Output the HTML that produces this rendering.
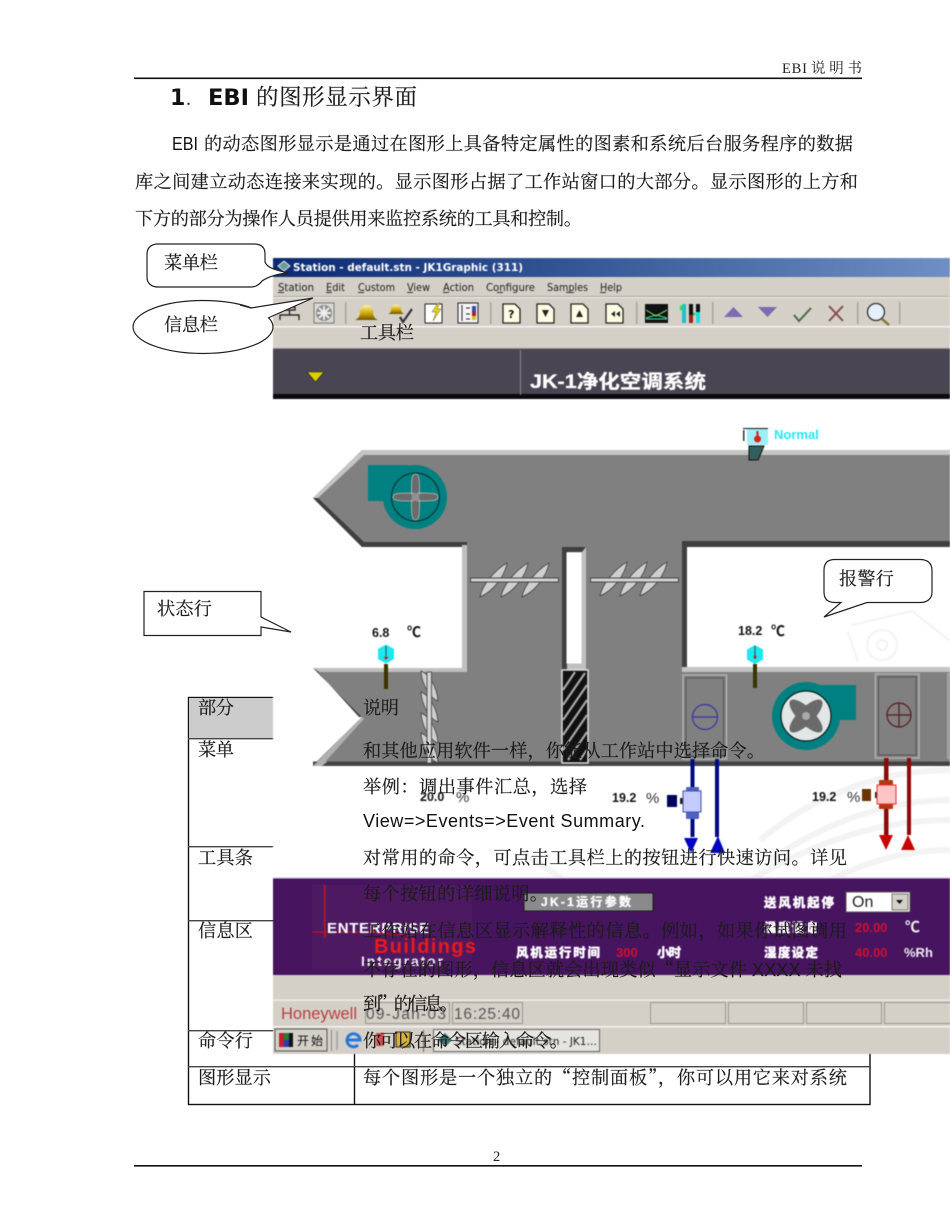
<!DOCTYPE html>
<html><head><meta charset="utf-8"><title>EBI 说明书</title>
<style>
html,body{margin:0;padding:0;background:#fff;width:950px;height:1230px;overflow:hidden}
svg{display:block;font-family:"Liberation Serif","Noto Serif CJK SC",serif}
.cn{font-family:"Noto Serif CJK SC","Liberation Serif",serif;font-size:18.2px;fill:#1c1c1c;stroke:#1c1c1c;stroke-width:.18}
.san{font-family:"Liberation Sans","Noto Sans CJK SC",sans-serif}
.ui{font-family:"DejaVu Sans","Liberation Sans",sans-serif}
.b{font-weight:700;fill:#111}
.w{font-family:"Noto Sans CJK SC",sans-serif;font-weight:900;fill:#fff;stroke:#fff;stroke-width:.3}
.soft{filter:blur(.45px)}
</style></head><body>
<svg width="950" height="1230" viewBox="0 0 950 1230" xmlns="http://www.w3.org/2000/svg">
<defs>
<linearGradient id="tb" x1="0" x2="1" y1="0" y2="0"><stop offset="0" stop-color="#0c2a72"/><stop offset=".5" stop-color="#3a5c9a"/><stop offset="1" stop-color="#6f90c4"/></linearGradient>
<linearGradient id="bell" x1="0" x2="0" y1="0" y2="1"><stop offset="0" stop-color="#fff2a0"/><stop offset=".6" stop-color="#c8a000"/><stop offset="1" stop-color="#6a5400"/></linearGradient>
<path id="leaf" d="M0 34C2 22 15 7 27 0C25 12 14 28 0 34Z" fill="#cfcfcf" stroke="#333" stroke-width=".7"/>
<path id="vleaf" d="M0 0C8 3 16 16 17 30C9 27 1 14 0 0Z" fill="#cfcfcf" stroke="#333" stroke-width=".7"/>
</defs>

<!-- header -->
<text x="782" y="73" font-size="14.500" textLength="25" fill="#222">EBI</text>
<text x="811" y="73" font-size="14.500" textLength="51" fill="#222" style="font-family:'Noto Serif CJK SC',serif">说明书</text>
<rect x="134" y="77.500" width="728" height="1.600" fill="#111"/>
<text x="170" y="105" font-size="22" class="ui" font-weight="700" fill="#111">1</text>
<text x="186" y="105" font-size="20" fill="#333">.</text>
<text x="208" y="105" font-size="22" class="ui" font-weight="700" fill="#111" textLength="41" lengthAdjust="spacingAndGlyphs">EBI</text>
<text x="256" y="105" class="cn" style="font-size:22.500px" textLength="161">的图形显示界面</text>
<text x="172" y="150" class="san" font-size="18" fill="#111" textLength="26" lengthAdjust="spacingAndGlyphs">EBI</text>
<text x="204" y="150" class="cn" textLength="649">的动态图形显示是通过在图形上具备特定属性的图素和系统后台服务程序的数据</text>
<text x="135" y="188" class="cn" textLength="723">库之间建立动态连接来实现的。显示图形占据了工作站窗口的大部分。显示图形的上方和</text>
<text x="135" y="225" class="cn" textLength="447">下方的部分为操作人员提供用来监控系统的工具和控制。</text>

<!-- table -->
<g fill="none" stroke="#111" stroke-width="1.400">
<rect x="188.500" y="697.500" width="681.500" height="407"/>
<line x1="354.500" y1="697" x2="354.500" y2="1105"/>
</g>
<rect x="189" y="698" width="100" height="40" fill="#cccccc"/>
<g fill="#444">
<rect x="188" y="738" width="682" height="1.400"/><rect x="188" y="846" width="682" height="1.400"/><rect x="188" y="920" width="682" height="1.400"/><rect x="188" y="1030" width="682" height="1.400"/><rect x="188" y="1066" width="682" height="1.400"/>
</g>

<!-- screenshot image -->
<g class="soft">
<rect x="273" y="258" width="677" height="796" fill="#fff"/>
<!-- window chrome -->
<rect x="273" y="258" width="677" height="19" fill="url(#tb)"/>
<rect x="273" y="277" width="677" height="72" fill="#d4d0c8"/>
<rect x="273" y="297" width="677" height="1" fill="#f4f2ec"/><rect x="273" y="296" width="677" height="1" fill="#aaa69e"/>
<rect x="273" y="326" width="677" height="1.500" fill="#f4f2ec"/>
<rect x="273" y="348" width="677" height="1.500" fill="#8e8a84"/>
<rect x="273" y="349" width="677" height="47" fill="#4a4552"/>
<rect x="273" y="394" width="677" height="5" fill="#0b0a0e"/>
<rect x="520" y="350" width="1" height="45" fill="#8c8890"/>
<path d="M307 372h17l-8.500 10z" fill="#d8d000" stroke="#222" stroke-width=".6"/>
<path d="M278 266l6-5 6 5-6 5z" fill="#6f9a9a" stroke="#d0e8e8" stroke-width="1"/>
<text x="293" y="271" class="ui" font-size="11" font-weight="700" fill="#fff" textLength="230" lengthAdjust="spacingAndGlyphs">Station - default.stn - JK1Graphic (311)</text>
<g class="ui" font-size="10.500" fill="#222">
<text x="278" y="291" textLength="36" lengthAdjust="spacingAndGlyphs">Station</text><text x="326" y="291" textLength="19" lengthAdjust="spacingAndGlyphs">Edit</text><text x="358" y="291" textLength="37" lengthAdjust="spacingAndGlyphs">Custom</text><text x="407" y="291" textLength="23" lengthAdjust="spacingAndGlyphs">View</text><text x="443" y="291" textLength="31" lengthAdjust="spacingAndGlyphs">Action</text><text x="486" y="291" textLength="49" lengthAdjust="spacingAndGlyphs">Configure</text><text x="547" y="291" textLength="41" lengthAdjust="spacingAndGlyphs">Samples</text><text x="600" y="291" textLength="22" lengthAdjust="spacingAndGlyphs">Help</text>
</g>
<g fill="#333"><rect x="278" y="292" width="6" height="1"/><rect x="326" y="292" width="6" height="1"/><rect x="358" y="292" width="6" height="1"/><rect x="407" y="292" width="6" height="1"/><rect x="443" y="292" width="6" height="1"/><rect x="497" y="292" width="6" height="1"/><rect x="566" y="292" width="8" height="1"/><rect x="600" y="292" width="6" height="1"/></g>
<!-- toolbar icons -->
<path d="M280 320v-5h19v5M289.500 315v-5M284 310h11v-3h-11z" fill="none" stroke="#111" stroke-width="1.200"/>
<rect x="314" y="303" width="20" height="20" fill="#d8d8d8" stroke="#777"/><circle cx="324" cy="313" r="8" fill="#888"/><path d="M324 306v14M317 313h14M319 308l10 10M329 308l-10 10" stroke="#eee" stroke-width="2"/>
<path d="M355 320c4-2 5-4 5-9 0-8 13-8 13 0 0 5 1 7 5 9z" fill="url(#bell)"/>
<path d="M388 314c3-1 3-3 3-5 0-6 10-6 10 0 0 2 1 4 3 5z" fill="url(#bell)"/><path d="M400 317l3 5 9-13" fill="none" stroke="#333" stroke-width="2.200"/>
<rect x="425" y="304" width="17" height="19" fill="#fff" stroke="#222"/><path d="M438 303l-6 9h4l-3 9 8-12h-4l3-6z" fill="#e8d800" stroke="#555" stroke-width=".5"/>
<rect x="458" y="303" width="20" height="20" fill="#f4f4f4" stroke="#222"/><rect x="472" y="306" width="4" height="5" fill="#3050b0"/><rect x="472" y="311" width="4" height="5" fill="#a02030"/><rect x="472" y="316" width="4" height="4" fill="#d8c020"/><path d="M462 305v16M466 308h4M466 314h4M466 319h4" stroke="#222"/>
<g fill="#ffffe4" stroke="#222" stroke-width="1.300"><path d="M503 304h12l5 5v14h-17z"/><path d="M537 304h12l5 5v14h-17z"/><path d="M571 304h12l5 5v14h-17z"/><path d="M606 304h12l5 5v14h-17z"/></g>
<text x="508" y="318" font-size="11" class="ui" font-weight="700" fill="#111">?</text>
<path d="M542 310h7l-3.500 7zM576 317h7l-3.500-7z" fill="#222"/><path d="M611 314l4-3v6zM616 314l4-3v6z" fill="#222"/>
<rect x="645" y="304" width="23" height="19" fill="#111"/><path d="M646 310l10 6 11-6M646 318l10-3 11 3" fill="none" stroke="#6be07a" stroke-width="1"/><path d="M646 319h21" stroke="#3ce0e0"/>
<g><rect x="682" y="304" width="4" height="19" fill="#20c0c8"/><rect x="689" y="304" width="4" height="19" fill="#111"/><rect x="689" y="315" width="4" height="8" fill="#a02020"/><rect x="696" y="304" width="4" height="19" fill="#20d8e0"/><rect x="696" y="304" width="4" height="8" fill="#111"/><path d="M680 305l4 3-4 3zM693 312l4 2-4 2z" fill="#20e050"/></g>
<path d="M724 317l9.500-10 9.500 10z" fill="#7b6bb0"/><path d="M758 307h19l-9.500 10z" fill="#7b6bb0"/>
<path d="M794 315l5 6 12-13" fill="none" stroke="#4a6a40" stroke-width="2"/><path d="M829 306l14 15M843 306l-14 15" stroke="#8a4a50" stroke-width="2"/>
<circle cx="876" cy="312" r="8.500" fill="#e4f0fa" stroke="#333" stroke-width="1.300"/><path d="M882 319l7 6" stroke="#8a7a30" stroke-width="2.500"/>
<g fill="#a8a49c"><rect x="345" y="302" width="1.500" height="22"/><rect x="490" y="302" width="1.500" height="22"/><rect x="636" y="302" width="1.500" height="22"/><rect x="712" y="302" width="1.500" height="22"/><rect x="857" y="302" width="1.500" height="22"/><rect x="899" y="302" width="1.500" height="22"/></g>
<text x="530" y="388" class="w" font-size="19" textLength="176" lengthAdjust="spacingAndGlyphs" style="font-family:'Liberation Sans','Noto Sans CJK SC',sans-serif;font-weight:700">JK-1净化空调系统</text>

<!-- watermark lower -->
<g fill="none" stroke="#f3f3f3" stroke-width="6">
<path d="M760 840c60-50 130-70 190-70M770 860c60-40 120-60 180-60M750 880c70-40 130-60 200-60M830 880c40-20 80-30 120-30M530 858l32 20"/>
</g>

<!-- duct upper -->
<path d="M313 498L362 450H950V541H682V668H467V547H362Z" fill="#808080"/>
<path d="M313 498L362 450H950v5H364L318 498z" fill="#c4c4c4"/>
<path d="M313 498L362 547H467v-5H364L318 498z" fill="#404040"/>
<rect x="462" y="545" width="5" height="125" fill="#c0c0c0"/>
<!-- lower duct -->
<path d="M313 668H950V765H313L362 717Z" fill="#808080"/>
<rect x="467" y="660" width="215" height="14" fill="#808080"/>
<path d="M313 668H467v4H320z" fill="#c0c0c0"/>
<path d="M313 668L362 717l-3 0L318 672z" fill="#404040"/>
<path d="M313 766L362 717l2 2-39 43z" fill="#b0b0b0"/>
<rect x="313" y="761.500" width="637" height="4.500" fill="#444"/>
<path d="M313 766l10-10 4 6-5 4z" fill="#b0b0b0"/>
<rect x="682" y="541" width="268" height="6" fill="#404040"/><rect x="682" y="541" width="5" height="128" fill="#404040"/>
<rect x="687" y="547" width="263" height="120" fill="#fff"/>
<rect x="682" y="667" width="268" height="5" fill="#c4c4c4"/>
<g fill="none" stroke="#f3f3f3" stroke-width="2"><path d="M852 625l60-14 38 30M858 662l-10-30"/><circle cx="882" cy="645" r="15"/><circle cx="882" cy="645" r="5"/></g>
<!-- slot -->
<rect x="562" y="547" width="24" height="123" fill="#c0c0c0"/><path d="M562 547h24l-4 5h-15v118h-5z" fill="#404040"/>
<rect x="566.500" y="552.500" width="15" height="111" fill="#fff"/>
<!-- filter -->
<rect x="562" y="670" width="26" height="93" fill="#111" stroke="#ddd" stroke-width="1.500"/>
<path d="M563 690l12-18M563 705l22-32M563 720l24-35M563 735l24-35M563 750l24-35M568 760l19-28M580 760l7-10" stroke="#a8a8a8" stroke-width="2.200"/>
<!-- dampers -->
<use href="#leaf" x="480" y="563"/><use href="#leaf" x="501" y="563"/><use href="#leaf" x="522" y="563"/>
<rect x="470.500" y="578" width="88" height="4" fill="#d4d4d4" stroke="#444"/>
<use href="#leaf" x="600" y="562"/><use href="#leaf" x="620" y="562"/><use href="#leaf" x="640" y="562"/>
<rect x="590.500" y="578" width="88" height="4" fill="#d4d4d4" stroke="#444"/>
<use href="#vleaf" x="421" y="671"/><use href="#vleaf" x="421" y="692"/><use href="#vleaf" x="421" y="713"/><use href="#vleaf" x="421" y="733"/>
<rect x="427" y="672" width="4.500" height="91" fill="#d4d4d4" stroke="#555"/>
<!-- fan 1 -->
<rect x="368" y="465" width="40" height="36" fill="#008080"/><circle cx="415" cy="497" r="32" fill="#008080"/>
<circle cx="415.500" cy="497" r="24" fill="#008080" stroke="#0a2a2a" stroke-width="1"/>
<path d="M415.500 474c4 0 4 6 4 20-1 2-7 2-8 0 0-14 0-20 4-20zM415.500 520c4 0 4-6 4-20-1-2-7-2-8 0 0 14 0 20 4 20zM393 497c0-4 6-4 20-4 2 1 2 7 0 8-14 0-20 0-20-4zM438 497c0-4-6-4-20-4-2 1-2 7 0 8 14 0 20 0 20-4z" fill="#6a6a6a" stroke="#bbb" stroke-width=".8"/>
<circle cx="415.500" cy="497" r="4" fill="#909090"/>
<!-- sensors -->
<g><path d="M386 644.500l8 4.500v10l-8 4.500-8-4.500v-10z" fill="#1be8f0"/><path d="M386 646v13" stroke="#444"/><path d="M383.500 657h5l-2.500 3z" fill="#c02020"/><rect x="384" y="664" width="4" height="25" fill="#3a3300"/>
<path d="M755 645l8 4.500v10l-8 4.500-8-4.500v-10z" fill="#1be8f0"/><path d="M755 646v13" stroke="#444"/><circle cx="755" cy="657" r="1.500" fill="#c02020"/><rect x="753" y="664" width="4" height="24" fill="#3a3300"/></g>
<g class="san" font-weight="700" font-size="12.500" fill="#111">
<text x="372" y="637">6.8</text><text x="407" y="637" font-size="14">℃</text>
<text x="738" y="635">18.2</text><text x="771" y="636" font-size="14">℃</text>
<text x="420" y="801">20.0</text><text x="612" y="802">19.2</text><text x="812" y="801">19.2</text>
</g>
<g class="san" font-size="15" fill="#333"><text x="456" y="802">%</text><text x="646" y="803">%</text><text x="847" y="802">%</text></g>
<!-- normal indicator -->
<text x="774" y="439" class="san" font-size="13" font-weight="700" fill="#22e8f4">Normal</text>
<rect x="747" y="429" width="21" height="16" fill="#9cf0f8"/><rect x="743" y="428" width="25" height="1" fill="#111"/><rect x="743" y="430" width="1.500" height="11" fill="#333"/>
<rect x="756.500" y="431" width="2" height="10" fill="#d02020"/><circle cx="757.500" cy="439" r="3.500" fill="#e02020"/>
<path d="M749 446h15l-6 14h-9z" fill="#33605e" stroke="#111"/>
<!-- fan 2 -->
<rect x="806" y="685" width="50" height="35" fill="#008080"/><circle cx="806" cy="716" r="34" fill="#008080"/>
<circle cx="806" cy="716" r="25" fill="#e2e6e6" stroke="#0a2020" stroke-width="1.200"/>
<ellipse cx="806" cy="716" rx="22" ry="8" fill="#6a6a6a" transform="rotate(45 806 716)"/>
<ellipse cx="806" cy="716" rx="22" ry="8" fill="#6a6a6a" transform="rotate(-45 806 716)"/>
<circle cx="806" cy="716" r="4" fill="#aaa"/>
<!-- coils -->
<g fill="none" stroke="#b0b0b0" stroke-width="1.500"><rect x="683" y="675" width="43.500" height="84"/><rect x="875.500" y="674" width="43.500" height="84"/><rect x="948" y="674" width="6" height="84"/></g>
<g fill="none" stroke="#555" stroke-width="1"><rect x="686" y="678" width="37.500" height="78"/><rect x="878.500" y="677" width="37.500" height="78"/></g>
<g fill="none" stroke-width="1.200"><circle cx="705" cy="717" r="12.500" stroke="#3535a5"/><path d="M692.500 717h25" stroke="#3535a5"/><circle cx="899" cy="715" r="12" stroke="#5a1a1a"/><path d="M887 715h24M899 703v24" stroke="#5a1a1a"/></g>
<!-- pipes -->
<rect x="690.500" y="759" width="4" height="78" fill="#000a80"/><rect x="715" y="759" width="4" height="78" fill="#000a80"/>
<path d="M684 838h14l-7 15z" fill="#0000c8"/><path d="M710 853h15l-7-17z" fill="#0000c8"/>
<rect x="884" y="758" width="4.500" height="77" fill="#8c0a0a"/><rect x="907" y="758" width="4" height="77" fill="#8c0a0a"/>
<path d="M879 835h14l-7 15z" fill="#c80000"/><path d="M901 850h14l-7-15z" fill="#c80000"/>
<rect x="667" y="795" width="10" height="12" fill="#00005c"/><rect x="680" y="798" width="4" height="6" fill="#222"/>
<rect x="686" y="787" width="13" height="32" rx="1" fill="#5060c0"/><rect x="683" y="791" width="18" height="21" fill="#c4ccff" stroke="#4050a8"/>
<rect x="862" y="789" width="9" height="12" fill="#6a3300"/><rect x="875" y="792" width="4" height="6" fill="#222"/>
<rect x="879" y="780" width="14" height="29" rx="1" fill="#b03a10"/><rect x="877" y="785" width="19" height="19" fill="#ffc4c4" stroke="#e03030"/>

<!-- purple band -->
<rect x="273" y="878" width="677" height="97" fill="#47145f"/>
<rect x="273" y="877" width="677" height="1.500" fill="#e4d8ea"/>
<rect x="312" y="885" width="160" height="85" fill="#4d1a62"/>
<rect x="324" y="885" width="1.500" height="53" fill="#c01818"/>
<path d="M312 932h60l40 4" stroke="#c01818" stroke-width="1.200" fill="none"/>
<text x="327" y="933" class="san" font-size="15" font-weight="700" fill="#fff" textLength="102">ENTERPRISE</text>
<text x="374" y="953" class="san" font-size="20" font-weight="700" fill="#f01818" textLength="102">Buildings</text>
<text x="361" y="966" class="san" font-size="14" font-weight="700" fill="#eee" textLength="82">Integrator</text>
<rect x="524" y="893" width="129" height="18" fill="#8a8a8a" stroke="#1a1a1a"/>
<text x="541" y="906" class="w" font-size="12" textLength="90" style="font-family:'Liberation Sans','Noto Sans CJK SC',sans-serif;font-weight:700">JK-1运行参数</text>
<g font-size="12.500">
<text x="516" y="957" class="w" textLength="84">风机运行时间</text><text x="764" y="907" class="w" textLength="70">送风机起停</text><text x="764" y="932" class="w" textLength="54">温度设定</text><text x="764" y="957" class="w" textLength="54">湿度设定</text><text x="657" y="957" class="w" textLength="24">小时</text>
</g>
<g class="san" font-weight="700" font-size="13" fill="#d01030"><text x="616" y="957">300</text><text x="855" y="932">20.00</text><text x="855" y="957">40.00</text></g>
<text x="905" y="932" class="san" font-size="15" font-weight="700" fill="#eee">℃</text>
<text x="904" y="957" class="san" font-size="13" font-weight="700" fill="#eee">%Rh</text>
<rect x="846" y="892" width="64" height="20" fill="#fff" stroke="#555"/><text x="852" y="907" class="san" font-size="16" fill="#222">On</text>
<rect x="892" y="894" width="16" height="16" fill="#d4d0c8" stroke="#777"/><path d="M896 900h7l-3.500 4z" fill="#111"/>

<!-- status -->
<rect x="273" y="975" width="677" height="79" fill="#d4d0c8"/>
<rect x="273" y="999.500" width="677" height="1.200" fill="#f4f2ee"/>
<rect x="273" y="1026" width="677" height="1.500" fill="#f4f2ee"/>
<text x="281" y="1019" class="san" font-size="16.500" fill="#b84040" textLength="76">Honeywell</text>
<g fill="none" stroke="#9a978f"><rect x="365.500" y="1002.500" width="84" height="21"/><rect x="452.500" y="1002.500" width="70" height="21"/><rect x="650.500" y="1002.500" width="75" height="21"/><rect x="728.500" y="1002.500" width="75" height="21"/><rect x="806.500" y="1002.500" width="75" height="21"/><rect x="884.500" y="1002.500" width="70" height="21"/></g>
<text x="366" y="1019" class="san" font-size="15.500" fill="#555" textLength="80">09-Jan-03</text>
<text x="454" y="1019" class="san" font-size="15.500" fill="#555" textLength="66">16:25:40</text>
<!-- taskbar -->
<rect x="275" y="1029" width="52" height="22" fill="#d4d0c8" stroke="#555"/>
<rect x="279" y="1033" width="5" height="14" fill="#c02030"/><rect x="284" y="1033" width="5" height="7" fill="#208030"/><rect x="284" y="1040" width="5" height="7" fill="#2040b0"/><rect x="289" y="1033" width="4" height="14" fill="#111"/>
<text x="297" y="1045" class="san" font-size="12" fill="#111" textLength="26">开始</text>
<rect x="331" y="1030" width="1" height="21" fill="#888"/><rect x="336" y="1031" width="2" height="19" fill="#aaa"/>
<path d="M347 1040h13a6.500 6.500 0 1 0-2 5" fill="none" stroke="#2878d8" stroke-width="3"/>
<rect x="376" y="1033" width="8" height="13" fill="#c83030" opacity=".8"/><rect x="396" y="1032" width="14" height="15" fill="#d8b040" stroke="#222"/>
<rect x="423" y="1030" width="1" height="22" fill="#666"/>
<rect x="433.500" y="1029.500" width="166" height="22" fill="#e6e4de" stroke="#666"/>
<path d="M438 1040l7-7 7 7-7 7z" fill="#3a7070"/>
<text x="455" y="1045" class="ui" font-size="10.500" fill="#222" textLength="142" lengthAdjust="spacingAndGlyphs">Station - default.stn - JK1…</text>
</g>

<!-- body overlay text -->
<text x="360" y="339" class="cn" textLength="54">工具栏</text>
<text x="198" y="714" class="cn" textLength="36">部分</text><text x="363" y="714" class="cn" textLength="36">说明</text>
<text x="198" y="756" class="cn" textLength="36">菜单</text>
<text x="363" y="757" class="cn" textLength="402">和其他应用软件一样，你能从工作站中选择命令。</text>
<text x="363" y="793" class="cn" textLength="224">举例：调出事件汇总，选择</text>
<text x="363" y="827" class="san" font-size="18" fill="#111" textLength="282">View=&gt;Events=&gt;Event Summary.</text>
<text x="198" y="864" class="cn" textLength="55">工具条</text>
<text x="363" y="864" class="cn" textLength="484">对常用的命令，可点击工具栏上的按钮进行快速访问。详见</text>
<text x="363" y="900" class="cn" textLength="185">每个按钮的详细说明。</text>
<text x="198" y="937" class="cn" textLength="55">信息区</text>
<text x="363" y="937" class="cn" textLength="484">工作站在信息区显示解释性的信息。例如，如果你试图调用</text>
<text x="363" y="976" class="cn" textLength="479">不存在的图形，信息区就会出现类似“显示文件 <tspan class="san">XXXX</tspan> 未找</text>
<text x="363" y="1010" class="cn" textLength="95">到”的信息。</text>
<text x="198" y="1047" class="cn" textLength="55">命令行</text>
<text x="363" y="1047" class="cn" textLength="205">你可以在命令区输入命令。</text>
<text x="198" y="1084" class="cn" textLength="73">图形显示</text>
<text x="363" y="1084" class="cn" textLength="484">每个图形是一个独立的“控制面板”，你可以用它来对系统</text>

<!-- callouts -->
<g fill="#fff" stroke="#222" stroke-width="1.200">
<path d="M158 244H254C262 244 265 248 265 254V262C267 268 276 270 288 273C276 274 268 277 262 281C259 285 256 287 250 287H158C151 287 147 283 147 277V254C147 248 151 244 158 244Z"/>
<ellipse cx="203" cy="327" rx="70" ry="26.500"/>
<path d="M250 308L313 298L267 318L262 322L240 312Z" stroke="none"/>
<path d="M240 305L251 308L313 298L268 318" fill="none"/>
<path d="M144 591.500H261V617L291 632L261 627V635.500H144Z"/>
<path d="M835 559.500H920C927 559.500 932 563 932 570V592C932 599 927 602.500 920 602.500H867L824 617L841 602.500H835C828 602.500 824 599 824 592V570C824 563 828 559.500 835 559.500Z"/>
</g>
<text x="164" y="269" class="cn" textLength="54">菜单栏</text>
<text x="164" y="331" class="cn" textLength="54">信息栏</text>
<text x="157" y="615" class="cn" textLength="55">状态行</text>
<text x="839" y="585" class="cn" textLength="55">报警行</text>

<!-- footer -->
<text x="493" y="1161" font-size="14.500" fill="#222">2</text>
<rect x="134" y="1165" width="728" height="1.600" fill="#111"/>
</svg>
</body></html>
